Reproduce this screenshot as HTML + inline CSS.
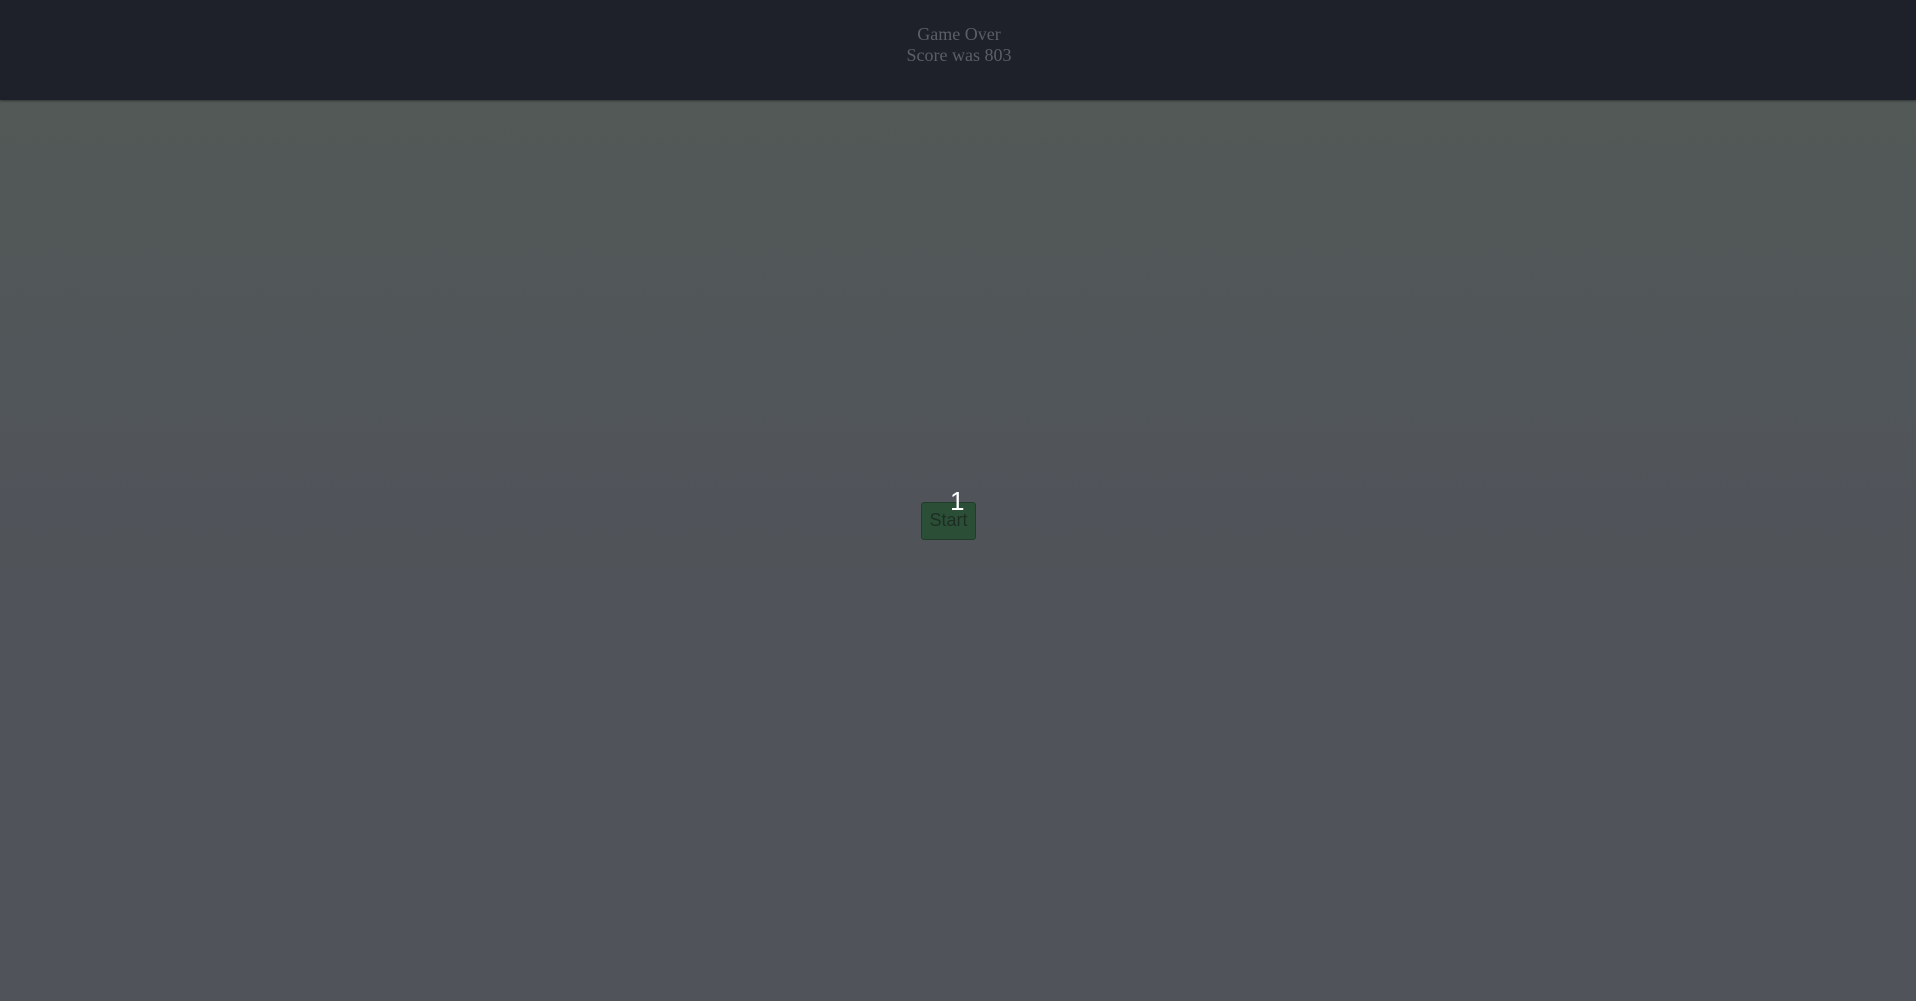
<!DOCTYPE html>
<html><head><style>
html,body{margin:0;padding:0;width:1916px;height:1001px;overflow:hidden;}
body{background:linear-gradient(to bottom,#525956 100px,#51565a 380px,#505359 600px,#505359 1001px);position:relative;font-family:"Liberation Sans",sans-serif;}
.hdr{position:absolute;left:0;top:0;width:1916px;height:100px;background:#1e2129;box-shadow:0 1px 2px rgba(0,0,0,.4);}
.t{position:absolute;left:1px;width:1916px;text-align:center;font-family:"Liberation Serif",serif;font-size:18px;color:#5a5f66;}
.btn{position:absolute;left:921px;top:502px;width:55px;height:38px;background:#2b4e36;border:1px solid #223c2b;border-radius:3px;box-sizing:border-box;text-align:center;font-size:18px;color:#1e2d24;line-height:34px;}
.n{position:absolute;left:950px;top:486px;font-size:26px;color:#fff;line-height:30px;}
</style></head><body>
<div class="hdr"></div>
<div class="t" style="top:24px">Game Over</div>
<div class="t" style="top:45px">Score was 803</div>
<div class="btn">Start</div>
<div class="n">1</div>
</body></html>
